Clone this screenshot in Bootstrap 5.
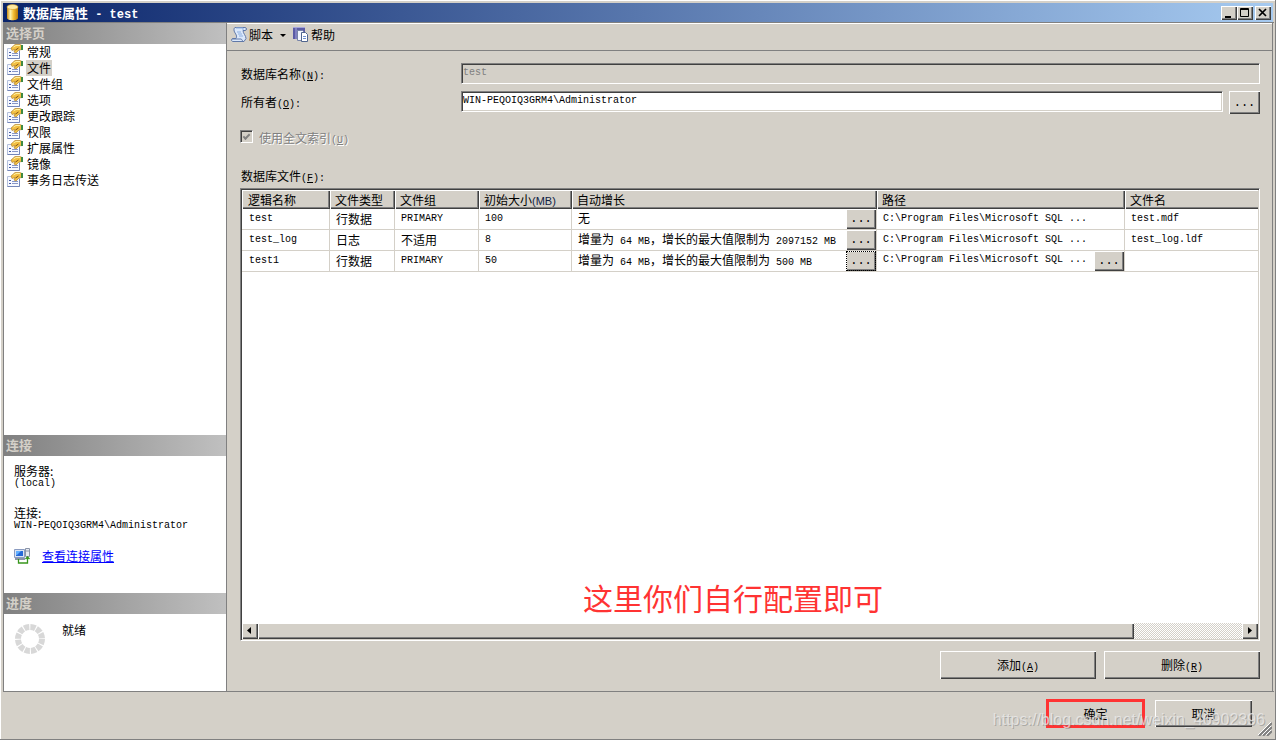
<!DOCTYPE html>
<html lang="zh-CN">
<head>
<meta charset="utf-8">
<meta name="viewport" content="width=device-width, initial-scale=1">
<title>数据库属性 - test</title>
<link href="https://cdn.jsdelivr.net/npm/bootstrap@5.3.0/dist/css/bootstrap.min.css" rel="stylesheet">
<style>
:root{--face:#d4d0c8;--shade:#808080;--dark:#404040}
body{background:var(--face);color:#000;font-family:"Liberation Sans","Noto Sans CJK SC",sans-serif;font-size:12px;line-height:16px}
.cjk,button,label,td,th{font-family:"Noto Sans CJK SC",sans-serif}
.mn{font-family:"Liberation Mono","Noto Sans CJK SC",monospace;font-size:10px}
span.mn{line-height:10px}
.win{min-height:100vh;padding:3px 1px 1px 3px;border:solid;border-width:0 1px 1px 0;border-color:var(--shade);box-shadow:inset 1px 1px #fff}
.titlebar{height:19px;background:linear-gradient(90deg,#0a246a,#a6caf0);color:#fff;font-size:13px;font-weight:700;padding:0 2px 0 3px;margin-right:1px}
.titlebar .mn{font-size:12px;white-space:pre}
.face{appearance:none;border:0;border-radius:0;background:var(--face);color:#000;padding:0;font-size:12px;line-height:16px;box-shadow:inset 1px 1px #fff,inset -1px -1px var(--dark),inset -2px -2px var(--shade)}
.cap{width:16px;height:14px}
.cap:last-child{margin-left:2px}
.cap svg{display:block;margin:auto}
.side{width:224px;background:#fff;border:solid var(--shade);border-width:0 1px 0 1px;flex:none}
.band{height:21px;background:linear-gradient(90deg,#808080,#c0c0c0);color:var(--face);font-size:13px;font-weight:700;line-height:19px;padding-left:2px;margin:0}
.pages a{height:16px;color:#000;text-decoration:none;gap:3px;padding-left:3px}
.pages a span{padding:0 1px;line-height:16px}
.pages a.active span{background:var(--face)}
.conn{height:137px;padding:8px 9px 0 10px}
.conn p{margin:0;line-height:13px}
.conn a{color:#00f}
.link-row{gap:12px}
.prog{height:77px;padding:8px 10px}
.main{border-right:1px solid var(--shade);margin-right:1px;min-width:0}
.frame{border-bottom:1px solid var(--shade);border-top:1px solid var(--shade)}
.tools{height:28px;border-bottom:1px solid var(--shade);box-shadow:inset 0 1px #fff;padding:0 0 4px 4px}
.tools button{border:0;background:none;color:#000;padding:0;display:flex;align-items:center;font-size:12px;line-height:16px;gap:1px}
.content{padding:12px 12px 12px 13px}
.frm{gap:6px;margin-bottom:7px}
.frm label{width:215px;flex:none;padding:3px 0 0 1px}
.well{border:1px solid;border-color:var(--shade) #fff #fff var(--shade);box-shadow:inset 1px 1px var(--dark),inset -1px -1px var(--face);border-radius:0;background:#fff}
input.well{height:21px;padding:0 1px 3px;font-size:10px;line-height:14px;color:#000;min-width:0}
input.well:disabled{background:var(--face);color:var(--shade);opacity:1}
.dots{width:31px;height:23px;flex:none}
.tick-row{gap:6px;margin-top:6px}
.tick-row label{padding-top:3px}
.tick{appearance:none;width:13px;height:13px;margin:0;border:1px solid;border-color:var(--shade) #fff #fff var(--shade);box-shadow:inset 1px 1px var(--dark);background:var(--face);display:grid;place-items:center}
.tick:checked::before{content:"";width:7px;height:4px;border:solid var(--shade);border-width:0 0 2px 2px;rotate:-45deg;margin-bottom:2px}
.off{color:var(--shade);text-shadow:1px 1px #fff}
.files-label{padding:22px 0 4px 1px}
.gridbox{padding:1px;overflow:hidden}
.files{width:100%;table-layout:fixed;border-collapse:separate;border-spacing:0}
.files th{height:19px;background:var(--face);font-weight:400;padding:0 0 1px 5px;line-height:17px;box-shadow:inset 1px 1px #fff,inset -1px -1px var(--dark),inset -2px -2px var(--shade);white-space:nowrap}
.files th:first-child{padding-left:6px}
.files th:last-child{box-shadow:inset 1px 1px #fff,inset 0 -1px var(--dark),inset 0 -2px var(--shade)}
.files th .lat{font-family:"Liberation Sans",sans-serif;font-size:11px;line-height:12px;color:#112244}
.files td{height:21px;padding:0 0 0 6px;border:solid var(--face);border-width:0 1px 1px 0;line-height:18px;white-space:nowrap;overflow:hidden}
.files td:first-child{padding-left:7px}
.files td:last-child{border-right:0}
.files td .flex-grow-1{line-height:18px}
.files td .dots{width:30px;height:20px}
.files .hot{outline:1px dotted #000;outline-offset:-1px}
.blank{min-height:120px;position:relative}
.note{position:absolute;left:341px;bottom:6px;color:#ff3333;font-size:30px;line-height:40px;white-space:nowrap}
.hbar{height:16px;background:repeating-conic-gradient(#fff 0 25%,var(--face) 0 50%) 0 0/2px 2px}
.hbar button{width:16px;flex:none}
.thumb{width:89%}
.acts{padding-top:10px}
.wide{width:156px;height:28px}
.foot{height:46px;padding:8px 22px 0 0;gap:11px;position:relative}
.foot button{width:97px;height:27px}
.mark-ok{outline:3px solid #ff3333!important;outline-offset:-2px}
.water{position:absolute;right:9px;top:16px;font-size:16px;line-height:24px;color:rgba(235,235,235,.75);text-shadow:1px 1px rgba(120,120,120,.45);pointer-events:none}
.grip{position:absolute;right:2px;bottom:2px}
</style>
</head>
<body>
<svg class="d-none">
<symbol id="prop" viewBox="0 0 16 15"><path d="M.5 4.500H12.500V14.500H.5z" fill="#f7f9ff" stroke="#b4c0dc"/><path d="M.5 14.500H12.500V7" fill="none" stroke="#7486b8"/><path d="M2 8.500h2M2 11.500h2" stroke="#445ca8"/><path d="M5 9.500h6M5 11.500h6" stroke="#8796c8"/><path d="M4 4 8 .5h5l2 1v4l-3 .5-3 3-2-1 1-2.500-3 1z" fill="#f3c044" stroke="#a87824" stroke-width=".6"/><path d="M6.500 3 9 1.500h4" stroke="#fff0a0" fill="none"/><path d="m8.500 6 3-2" stroke="#81500f"/><path d="M14 1h2v5h-2z" fill="#3e8a43"/></symbol>
</svg>
<div class="win d-flex flex-column">
  <header class="titlebar d-flex align-items-center cjk">
    <svg width="13" height="17" viewBox="0 0 13 17"><defs><linearGradient id="gold"><stop stop-color="#c98a12"/><stop offset=".3" stop-color="#fff3b0"/><stop offset=".6" stop-color="#f5bd32"/><stop offset="1" stop-color="#b87708"/></linearGradient></defs><path d="M1 3v11c0 3 11 3 11 0V3z" fill="url(#gold)"/><ellipse cx="6.500" cy="3" rx="5.500" ry="2.500" fill="#ffe9a0" stroke="#d49a25" stroke-width=".6"/></svg>
    <span class="ms-1 flex-grow-1">数据库属性<span class="mn"> - test</span></span>
    <button class="face cap" aria-label="最小化"><svg width="16" height="14"><path d="M4 10h6v2H4z"/></svg></button>
    <button class="face cap" aria-label="最大化"><svg width="16" height="14"><path d="M3.500 2.500h8v8h-8zM3 3.500h9" fill="none" stroke="#000"/></svg></button>
    <button class="face cap" aria-label="关闭"><svg width="16" height="14"><path d="m4 3 7 7m0-7-7 7" stroke="#000" stroke-width="1.700"/></svg></button>
  </header>
  <div class="frame d-flex flex-grow-1">
    <aside class="side d-flex flex-column cjk">
      <h2 class="band">选择页</h2>
      <nav class="pages d-flex flex-column flex-grow-1">
        <a href="#" class="d-flex"><svg width="16" height="15"><use href="#prop"/></svg><span>常规</span></a>
        <a href="#" class="d-flex active"><svg width="16" height="15"><use href="#prop"/></svg><span>文件</span></a>
        <a href="#" class="d-flex"><svg width="16" height="15"><use href="#prop"/></svg><span>文件组</span></a>
        <a href="#" class="d-flex"><svg width="16" height="15"><use href="#prop"/></svg><span>选项</span></a>
        <a href="#" class="d-flex"><svg width="16" height="15"><use href="#prop"/></svg><span>更改跟踪</span></a>
        <a href="#" class="d-flex"><svg width="16" height="15"><use href="#prop"/></svg><span>权限</span></a>
        <a href="#" class="d-flex"><svg width="16" height="15"><use href="#prop"/></svg><span>扩展属性</span></a>
        <a href="#" class="d-flex"><svg width="16" height="15"><use href="#prop"/></svg><span>镜像</span></a>
        <a href="#" class="d-flex"><svg width="16" height="15"><use href="#prop"/></svg><span>事务日志传送</span></a>
      </nav>
      <h2 class="band">连接</h2>
      <div class="conn">
        <p>服务器:</p>
        <p class="mn">(local)</p>
        <p class="mt-3">连接:</p>
        <p class="mn">WIN-PEQOIQ3GRM4\Administrator</p>
        <div class="d-flex align-items-center mt-3 link-row">
          <svg width="16" height="16" viewBox="0 0 16 16"><path d="M.5 1.500h10v8H.5z" fill="#dce4f2" stroke="#8a9bc0"/><path d="M2 3h7v5H2z" fill="#2467d8"/><path d="M2 3h5L3 7H2z" fill="#62b0ff"/><path d="M1 11h10" stroke="#8a94a8" stroke-width="2"/><path d="M11.500.5h4v8h-4z" fill="#e8ebf2" stroke="#8a94a8"/><path d="M12 3h3" stroke="#8a94a8"/><path d="M4.500 11v4h9V9M11.500 11l2-2 2 2" fill="none" stroke="#38961c" stroke-width="1.300"/></svg>
          <a href="#">查看连接属性</a>
        </div>
      </div>
      <h2 class="band">进度</h2>
      <div class="prog d-flex align-items-start">
        <svg width="32" height="34" viewBox="0 0 32 34"><circle cx="16" cy="17" r="12" fill="none" stroke="#d8d8d8" stroke-width="6" stroke-dasharray="5.200 1.083"/></svg>
        <span class="ms-3">就绪</span>
      </div>
    </aside>
    <main class="main flex-grow-1 d-flex flex-column">
      <div class="tools d-flex align-items-center cjk">
        <button><svg width="17" height="17" viewBox="0 0 17 17"><path d="M4 1.500h10c2 0 2 3 0 3h-2c0 3 3 5 3 8l-2 3H2c-2 0-2-3 0-3h3C7 9 3 7 3 4c0-1 0-2 1-2.500z" fill="#dbe8fb" stroke="#6078a8"/><path d="M5 2h7v2M6 6h4M7 8h4M8 10h4" stroke="#8caee0" fill="none"/><path d="M1 13h9c1 0 1 2 2 2" stroke="#6078a8" fill="none"/></svg>脚本<svg class="ms-1" width="10" height="16"><path d="M2 7h6L5 10z"/></svg></button>
        <button class="ms-1"><svg width="18" height="17" viewBox="0 0 18 17"><path d="M1 1h12v12H1z" fill="#5c5ca6"/><path d="M4 1v12M1 1.500h12" stroke="#a5a5dc"/><path d="M5.500 4.500h5l2 2v8h-7z" fill="#f4f7ff" stroke="#7884a8"/><path d="M9.500 6.500h4l2 2v7h-6z" fill="#fff" stroke="#50658e"/><path d="M11 10.500h3m-3 2h3" stroke="#6e90d0"/></svg>帮助</button>
      </div>
      <form class="content flex-grow-1 d-flex flex-column" onsubmit="return false">
        <div class="d-flex frm"><label for="db">数据库名称<span class="mn">(<u>N</u>):</span></label><input id="db" class="well mn flex-grow-1" value="test" disabled></div>
        <div class="d-flex frm"><label for="own">所有者<span class="mn">(<u>O</u>):</span></label><input id="own" class="well mn flex-grow-1" value="WIN-PEQOIQ3GRM4\Administrator"><button type="button" class="face dots mn" aria-label="浏览所有者">...</button></div>
        <div class="d-flex align-items-center tick-row"><input id="ft" type="checkbox" class="tick" checked disabled><label for="ft" class="off">使用全文索引<span class="mn">(<u>U</u>)</span></label></div>
        <div class="cjk files-label">数据库文件<span class="mn">(<u>F</u>):</span></div>
        <div class="well gridbox flex-grow-1 d-flex flex-column">
          <table class="files">
            <colgroup><col style="width:88px"><col style="width:65px"><col style="width:84px"><col style="width:93px"><col style="width:305px"><col style="width:248px"><col></colgroup>
            <thead><tr><th>逻辑名称</th><th>文件类型</th><th>文件组</th><th>初始大小<span class="lat">(MB)</span></th><th>自动增长</th><th>路径</th><th>文件名</th></tr></thead>
            <tbody>
              <tr><td class="mn">test</td><td>行数据</td><td class="mn">PRIMARY</td><td class="mn">100</td><td><div class="d-flex"><span class="flex-grow-1">无</span><button type="button" class="face dots mn">...</button></div></td><td class="mn">C:\Program Files\Microsoft SQL ...</td><td class="mn">test.mdf</td></tr>
              <tr><td class="mn">test_log</td><td>日志</td><td>不适用</td><td class="mn">8</td><td><div class="d-flex"><span class="flex-grow-1">增量为<span class="mn"> 64 MB</span>，增长的最大值限制为<span class="mn"> 2097152 MB</span></span><button type="button" class="face dots mn">...</button></div></td><td class="mn">C:\Program Files\Microsoft SQL ...</td><td class="mn">test_log.ldf</td></tr>
              <tr><td class="mn">test1</td><td>行数据</td><td class="mn">PRIMARY</td><td class="mn">50</td><td><div class="d-flex"><span class="flex-grow-1">增量为<span class="mn"> 64 MB</span>，增长的最大值限制为<span class="mn"> 500 MB</span></span><button type="button" class="face dots mn hot">...</button></div></td><td class="mn"><div class="d-flex"><span class="flex-grow-1">C:\Program Files\Microsoft SQL ...</span><button type="button" class="face dots mn">...</button></div></td><td></td></tr>
            </tbody>
          </table>
          <div class="blank flex-grow-1"><div class="note cjk">这里你们自行配置即可</div></div>
          <div class="hbar d-flex"><button type="button" class="face" aria-label="向左滚动"><svg class="d-block" width="16" height="16"><path d="M9 4v7L5 7.500z"/></svg></button><div class="flex-grow-1 d-flex"><div class="face thumb"></div></div><button type="button" class="face" aria-label="向右滚动"><svg class="d-block" width="16" height="16"><path d="M6 4v7l4-3.500z"/></svg></button></div>
        </div>
        <div class="d-flex justify-content-end gap-2 acts"><button type="button" class="face wide">添加<span class="mn">(<u>A</u>)</span></button><button type="button" class="face wide">删除<span class="mn">(<u>R</u>)</span></button></div>
      </form>
    </main>
  </div>
  <footer class="foot d-flex justify-content-end">
    <button class="face mark-ok">确定</button><button class="face">取消</button>
    <span class="water">https://blog.csdn.net/weixin_46902396</span>
    <svg class="grip" width="14" height="14"><path d="M1 14 14 1M5 14l9-9M9 14l5-5" stroke="#808080" stroke-width="2"/><path d="M0 13 13 0M4 13l9-9M8 13l5-5" stroke="#fff"/></svg>
  </footer>
</div>
<script src="https://cdn.jsdelivr.net/npm/bootstrap@5.3.0/dist/js/bootstrap.bundle.min.js"></script>
</body>
</html>
